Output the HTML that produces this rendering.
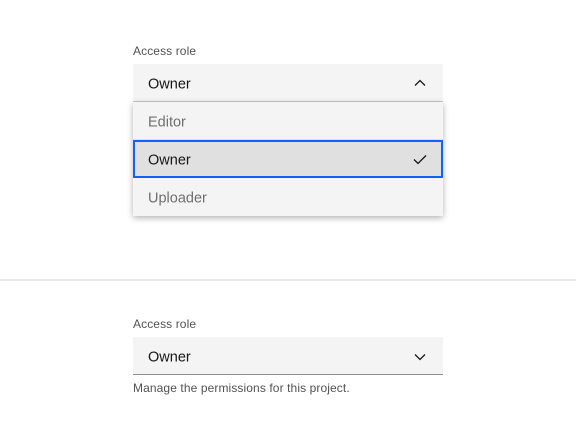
<!DOCTYPE html>
<html><head><style>
*{margin:0;padding:0;box-sizing:border-box}
body{width:576px;height:432px;background:#fff;font-family:"Liberation Sans",sans-serif;position:relative;overflow:hidden}
.lbl{position:absolute;left:133px;font-size:12px;color:#525252;letter-spacing:.1px}
.field{position:absolute;left:133px;width:310px;background:#f4f4f4;font-size:14.5px;color:#161616}
.field span,.item span{position:absolute;left:15px;top:50%;transform:translateY(-40%)}
.item{position:absolute;left:0;width:310px;height:38px;font-size:14.5px;color:#6f6f6f}
svg{position:absolute}
</style></head><body>
<div class="lbl" style="top:44px">Access role</div>
<div class="field" style="top:64px;height:38px;border-bottom:1px solid #c6c6c6"><span>Owner</span>
<svg style="right:17px;top:15px" width="12" height="8" viewBox="0 0 12 8"><path d="M1 6.5L6 1.5L11 6.5" fill="none" stroke="#161616" stroke-width="1.3"/></svg></div>
<div style="position:absolute;left:133px;top:102px;width:310px;height:114px;background:#f4f4f4;box-shadow:0 2px 6px rgba(0,0,0,.3)">
<div class="item" style="top:0;border-bottom:1px solid #e0e0e0"><span>Editor</span></div>
<div class="item" style="top:38px;background:#e0e0e0;border:2px solid #0f62fe;color:#161616"><span style="left:13px">Owner</span>
<svg style="right:14px;top:12px" width="14" height="11" viewBox="0 0 14 11"><path d="M1 5.5L5 9.5L13 1.5" fill="none" stroke="#161616" stroke-width="1.3"/></svg></div>
<div class="item" style="top:76px"><span>Uploader</span></div>
</div>
<div style="position:absolute;left:0;top:279px;width:576px;height:2px;background:#e8e8e8"></div>
<div class="lbl" style="top:317px">Access role</div>
<div class="field" style="top:337px;height:38px;border-bottom:1px solid #8d8d8d"><span>Owner</span>
<svg style="right:17px;top:16px" width="12" height="8" viewBox="0 0 12 8"><path d="M1 1.5L6 6.5L11 1.5" fill="none" stroke="#161616" stroke-width="1.3"/></svg></div>
<div class="lbl" style="top:381px">Manage the permissions for this project.</div>
</body></html>
